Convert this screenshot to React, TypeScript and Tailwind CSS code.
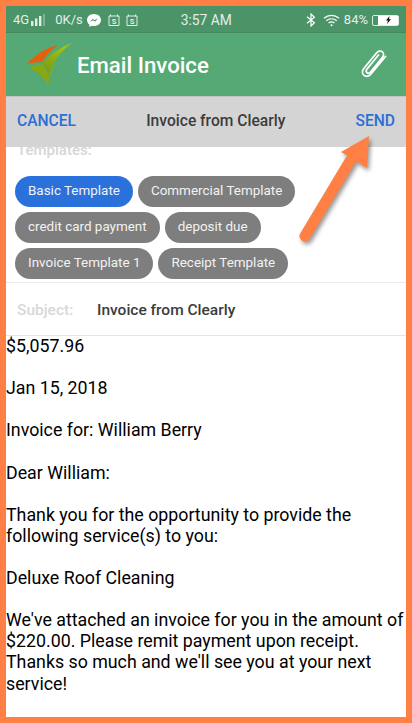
const CHIP_ROWS = [
  ["Basic Template", "Commercial Template"],
  ["credit card payment", "deposit due"],
  ["Invoice Template 1", "Receipt Template"],
];

function CalendarS({ className }: { className: string }) {
  return (
    <svg width="12" height="12" viewBox="0 0 12 12" className={className} fill="none" stroke="currentColor">
      <path d="M1 2h10v9.500H1z M2.500 .5v2 M9.500 .5v2" />
      <text x="6" y="9.500" fontSize="7.500" fontWeight="700" textAnchor="middle" fill="currentColor" stroke="none" fontFamily="Roboto, sans-serif">S</text>
    </svg>
  );
}

function StatusBar() {
  return (
    <div className="flex h-[27px] items-center border-b border-[#47875f] bg-[#4b9468] pl-[7px] pr-[7px] pt-[2px] text-[13px] text-[#e3efe8]">
      <span>4G</span>
      <svg width="16" height="12" viewBox="0 0 16 12" className="ml-[1px]" fill="currentColor">
        <rect x="1" y="7" width="2.400" height="5" />
        <rect x="5" y="4.500" width="2.400" height="7.500" />
        <rect x="9" y="2" width="2.400" height="10" />
        <rect x="13" y="0" width="2" height="12" opacity="0.35" />
      </svg>
      <span className="ml-[9px]">0K/s</span>
      <svg width="16" height="15" viewBox="0 0 16 15" className="ml-[3px]">
        <path d="M8 1C3.900 1 1 3.800 1 7.100c0 1.900.9 3.500 2.400 4.600V14l2.200-1.200c.8.2 1.600.3 2.400.3 4.100 0 7-2.700 7-6S12.100 1 8 1z" fill="#fff" />
        <path d="M3.800 9l3-3.300 1.700 1.600L12 5.300 9 8.800 7.300 7.200z" fill="#4b9468" />
      </svg>
      <CalendarS className="ml-[6px]" />
      <CalendarS className="ml-[6px]" />
      <span className="ml-[43px] text-[13.800px]">3:57 AM</span>
      <svg width="10" height="14" viewBox="0 0 10 14" className="ml-auto" fill="none" stroke="#fff" strokeWidth="1.200">
        <path d="M1 3.800l7.400 6L5 13V1l3.400 3.200L1 10.200" />
      </svg>
      <svg width="17" height="13" viewBox="0 0 17 13" className="ml-[7px]" fill="none" stroke="#fff" strokeWidth="1.200">
        <path d="M1 4.200c4.300-3.800 10.700-3.800 15 0 M3.300 6.700c3-2.600 7.400-2.600 10.400 0 M5.600 9c1.700-1.400 4.100-1.400 5.800 0" />
        <circle cx="8.500" cy="11.300" r="1" fill="#fff" stroke="none" />
      </svg>
      <span className="ml-[4px]">84%</span>
      <div className="ml-[4px] flex h-[11px] w-[27px] items-center rounded-[2px] border border-[#dfeee5] pl-[5px]">
        <div className="flex h-full flex-1 items-center justify-center bg-white">
          <svg width="7" height="8" viewBox="0 0 7 8" fill="#111">
            <path d="M4.500 0L1 4.500h2L2 8l4-4.700H4z" />
          </svg>
        </div>
      </div>
    </div>
  );
}

function Logo() {
  return (
    <svg width="46" height="44" viewBox="0 0 46 44">
      <defs>
        <linearGradient id="blade" x1="0.800" y1="0" x2="0.300" y2="1">
          <stop offset="0" stopColor="#a8c814" />
          <stop offset="1" stopColor="#7d9c0c" />
        </linearGradient>
      </defs>
      <path d="M0 21C8 12 18 5 31 2 24 7 19 13 15 19 9 19 4 20 0 21z" fill="#e4610c" />
      <path d="M45 0C32 5 22 12 16 20 18 23 20 27 21 31 26 18 34 8 45 0z" fill="url(#blade)" />
      <path d="M1 24C7 23 11 22 15 21 18 25 20 29 21 33 24 25 29 18 33 12 27 21 23 31 21 42 17 34 10 28 1 24z" fill="#8aa812" />
    </svg>
  );
}

function AppHeader() {
  return (
    <div className="flex h-[63px] items-center bg-[#55a975] pl-[21px] pr-[18px]">
      <Logo />
      <span className="ml-[4px] pt-[3px] text-[22.200px] font-medium text-white">Email Invoice</span>
      <svg width="27" height="29" viewBox="0 0 27 29" className="ml-auto" fill="none" stroke="#fff" strokeWidth="1.800" strokeLinecap="round" strokeLinejoin="round">
        <path d="M24.500 6.500L10 24c-2 2.500-5 3-7 1.400s-2-4.700 0-7.200L15.500 3c1.700-2 4.200-2.500 5.800-1.200s1.600 3.800 0 5.800L9.500 22c-1 1.200-2.600 1.500-3.600.7s-1-2.400 0-3.600L17.500 5" />
      </svg>
    </div>
  );
}

function ActionBar() {
  return (
    <div className="relative z-10 flex h-[51px] items-center justify-between border-t border-[#c4c4c4] bg-[#d4d4d4] px-[11px] text-[15.600px] font-medium">
      <span className="text-[#2a6fd6]">CANCEL</span>
      <span className="text-[#3c3c3c]">Invoice from Clearly</span>
      <span className="text-[#2a6fd6]">SEND</span>
    </div>
  );
}

function Templates() {
  return (
    <div className="relative h-[136px] overflow-hidden border-b border-[#ebebeb] pl-[9px]">
      {/* the label is scrolled partly under the action bar */}
      <div className="-mt-[6px] pl-[2px] text-[15px] font-medium leading-[18px] text-[#d6d6d6]">Templates:</div>
      <div className="mt-[17px] flex flex-col gap-[5px]">
        {CHIP_ROWS.map((row, r) => (
          <div key={r} className="flex gap-[5px]">
            {row.map((chip) => (
              <div
                key={chip}
                className={
                  "flex h-[31px] items-center rounded-full px-[13px] text-[13.450px] text-[#f2f2f2] " +
                  (chip === "Basic Template" ? "bg-[#2a71dc]" : "bg-[#7e7e7e]")
                }
              >
                {chip}
              </div>
            ))}
          </div>
        ))}
      </div>
    </div>
  );
}

function SubjectRow() {
  return (
    <div className="flex h-[53px] items-center border-b border-[#e6e6e6] pl-[11px] pt-[3px] text-[15.500px] font-medium">
      <span className="w-[80px] text-[#d8d8d8]">Subject:</span>
      <span className="text-[#3c3c3c]">Invoice from Clearly</span>
    </div>
  );
}

function Body() {
  return (
    <div className="-mt-[1px] whitespace-pre-line text-[17.800px] leading-[21.100px] text-black">
      {`$5,057.96

Jan 15, 2018

Invoice for: William Berry

Dear William:

Thank you for the opportunity to provide the
following service(s) to you:

Deluxe Roof Cleaning

We've attached an invoice for you in the amount of
$220.00. Please remit payment upon receipt.
Thanks so much and we'll see you at your next
service!`}
    </div>
  );
}

export default function App() {
  return (
    <div className="relative h-[723px] w-[412px] overflow-hidden border-[6px] border-[#ff7f45] bg-white font-['Roboto',sans-serif]">
      <StatusBar />
      <AppHeader />
      <ActionBar />
      <Templates />
      <SubjectRow />
      <Body />
      {/* callout arrow pasted over the screenshot */}
      <svg
        width="90"
        height="120"
        viewBox="0 0 90 120"
        className="absolute left-[284px] top-[127px] z-20 drop-shadow-[2px_3px_2px_rgba(0,0,0,0.4)]"
      >
        <path d="M15 103L60 28" stroke="#ff7f45" strokeWidth="11" strokeLinecap="round" fill="none" />
        <path d="M79 3L51 19 77 35z" fill="#ff7f45" />
      </svg>
    </div>
  );
}
